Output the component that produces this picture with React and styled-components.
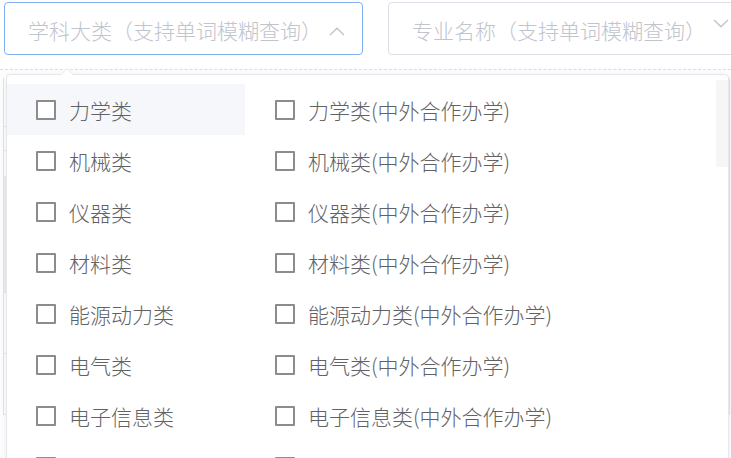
import React from 'react';
import styled, { createGlobalStyle } from 'styled-components';

const GlobalStyle = createGlobalStyle`
  html, body {
    margin: 0;
    padding: 0;
    background: #fff;
    overflow: hidden;
  }

  body {
    font-family: "Noto Sans CJK SC", "Noto Sans", sans-serif;
  }
`;

const Page = styled.div`
  position: relative;
  width: 731px;
  height: 458px;
  overflow: hidden;
  padding: 2px 0 0 4px;
  box-sizing: border-box;
`;

const FilterBar = styled.div`
  display: flex;
  gap: 25px;
`;

const Select = styled.div`
  flex-shrink: 0;
  width: 359px;
  height: 53px;
  box-sizing: border-box;
  border: 1px solid ${props => props.$focused ? '#80b2f3' : '#dcdfe6'};
  border-radius: 4px;
  display: flex;
  align-items: center;
  justify-content: space-between;
  padding: 3px 17px 0 23px;
  background: #fff;
`;

const Placeholder = styled.span`
  color: #c0c4cc;
  font-size: 21px;
  font-weight: 300;
  white-space: nowrap;
`;

const Chevron = styled.svg`
  width: 16px;
  height: 9px;
  margin-top: ${props => props.$up ? '3px' : '-14px'};
  flex-shrink: 0;
`;

const Divider = styled.div`
  margin: 14px 0 0 -4px;
  border-top: 1px dashed #dedede;
`;

const Table = styled.div`
  margin: 8px 1px 0 -1px;
  border-left: 1px solid #e6e6e6;
  border-right: 1px solid #e6e6e6;
`;

const TableRow = styled.div`
  height: ${props => props.$h}px;
  border-bottom: 1px solid #e8e8e8;
  background: ${props => props.$shade ? '#eeeeee' : '#fff'};
`;

const Dropdown = styled.div`
  position: absolute;
  left: 6px;
  top: 74px;
  width: 723px;
  height: 420px;
  box-sizing: border-box;
  background: #fff;
  border: 1px solid #e4e7ed;
  border-radius: 4px;
  box-shadow: 0 2px 12px rgba(0, 0, 0, 0.08);
`;

const Arrow = styled.span`
  position: absolute;
  top: -7px;
  left: 53px;
  width: 0;
  height: 0;
  border-left: 7px solid transparent;
  border-right: 7px solid transparent;
  border-bottom: 7px solid #e4e7ed;

  &::after {
    content: '';
    position: absolute;
    left: -6px;
    top: 1px;
    border-left: 6px solid transparent;
    border-right: 6px solid transparent;
    border-bottom: 6px solid #fff;
  }
`;

const ScrollThumb = styled.span`
  position: absolute;
  right: 0;
  top: 5px;
  width: 12px;
  height: 87px;
  background: #f6f6f6;
  border-radius: 2px;
`;

const OptionGrid = styled.div`
  display: grid;
  grid-template-columns: 238px 240px;
  grid-auto-rows: 51px;
  padding-top: 9px;
`;

const Option = styled.label`
  display: flex;
  align-items: center;
  gap: 13px;
  padding-left: ${props => props.$col === 0 ? 29 : 30}px;
  background: ${props => props.$hover ? '#f5f7fa' : 'transparent'};
  color: #606266;
  font-size: 21px;
  font-weight: 300;
  white-space: nowrap;
  cursor: pointer;
`;

const Box = styled.span`
  width: 20px;
  height: 20px;
  box-sizing: border-box;
  border: 2px solid #8c8c8c;
  border-radius: 1px;
  background: #fff;
  flex-shrink: 0;
`;

const categories = ['力学类', '机械类', '仪器类', '材料类', '能源动力类', '电气类', '电子信息类', '计算机类'];

const options = categories.flatMap(name => [name, `${name}(中外合作办学)`]);

const tableRows = [
  { h: 48 },
  { h: 23 },
  { h: 25 },
  { h: 115, shade: true },
  { h: 60 },
  { h: 60 },
];

const App = () => (
  <>
    <GlobalStyle />
    <Page>
      <FilterBar>
        <Select $focused>
          <Placeholder>学科大类（支持单词模糊查询）</Placeholder>
          <Chevron $up viewBox="0 0 16 9">
            <path d="M1 8 L8 1.2 L15 8" fill="none" stroke="#c0c4cc" strokeWidth="1.4" />
          </Chevron>
        </Select>
        <Select>
          <Placeholder>专业名称（支持单词模糊查询）</Placeholder>
          <Chevron viewBox="0 0 16 9">
            <path d="M1 1 L8 7.8 L15 1" fill="none" stroke="#c0c4cc" strokeWidth="1.4" />
          </Chevron>
        </Select>
      </FilterBar>

      <Divider />

      <Table>
        {tableRows.map((row, i) => (
          <TableRow key={i} $h={row.h} $shade={row.shade} />
        ))}
      </Table>

      <Dropdown>
        <Arrow />
        <ScrollThumb />
        <OptionGrid>
          {options.map((label, i) => (
            <Option key={label} $col={i % 2} $hover={i === 0}>
              <Box />
              {label}
            </Option>
          ))}
        </OptionGrid>
      </Dropdown>
    </Page>
  </>
);

export default App;
